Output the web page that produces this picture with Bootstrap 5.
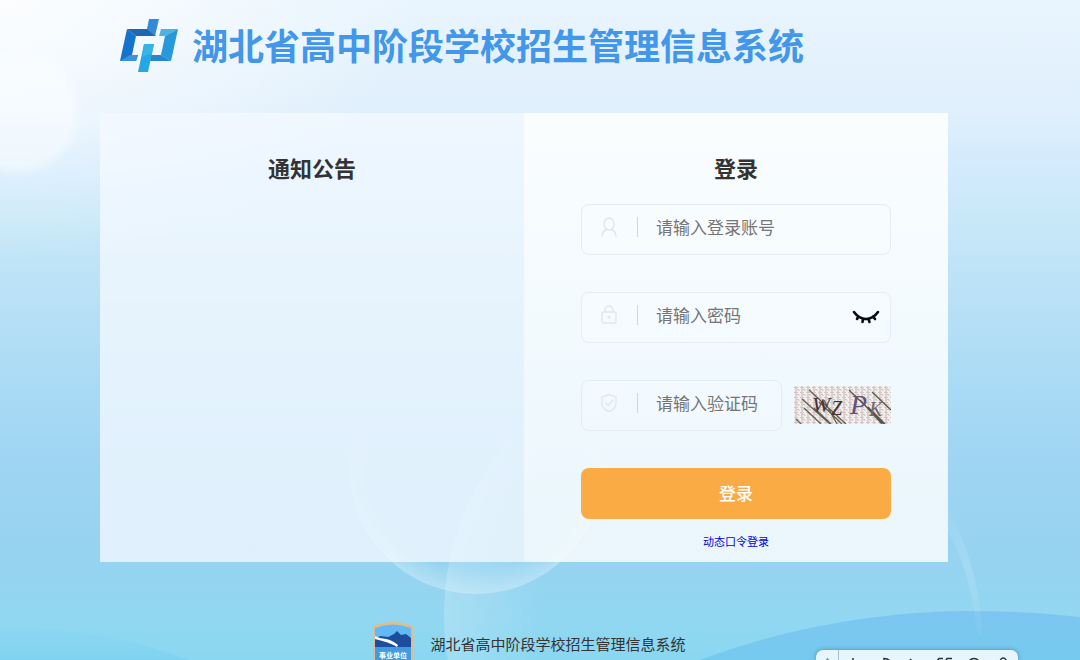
<!DOCTYPE html>
<html lang="zh-CN">
<head>
<meta charset="utf-8">
<meta name="viewport" content="width=device-width, initial-scale=1">
<title>湖北省高中阶段学校招生管理信息系统</title>
<link href="https://cdn.jsdelivr.net/npm/bootstrap@5.3.0/dist/css/bootstrap.min.css" rel="stylesheet">
<style>
  body { font-family: "Noto Sans CJK SC", sans-serif; color: #333; background: #9ad4f1; }
  .page { background: linear-gradient(180deg, #e9f5fe 0, #dfeffc 17%, #d0eafc 27%, #c8e8f8 33%, #b8e0f6 46%, #a9daf5 59%, #9dd4f2 72%, #96d3f0 84%, #92d7f1 94%, #8ad7f1 100%); padding: 0 132px 0 100px; }
  .scenery { z-index: 0; }
  .brand-bar { padding: 19px 20px 0; height: 113px; gap: 14px; }
  .brand-title { font-size: 36px; line-height: 50px; color: #4397ea; font-weight: 700; }
  .notice-side { background: rgba(243, 248, 255, .78); padding: 38px 20px; }
  .login-side { background: linear-gradient(rgba(253, 255, 255, .9), rgba(250, 253, 255, .84)); padding: 38px 57px 13px; }
  .panel-title { font-size: 22px; line-height: 32px; font-weight: 700; }
  .login-form { margin-top: 21px; gap: 37px; }
  .field { height: 51px; border: 1px solid #e3edf3; border-radius: 8px; padding: 0 10px 5px 17px; background: rgba(248, 251, 255, .35); }
  .field svg { flex: none; }
  .field-rule { width: 1px; height: 20px; background: #cfd6dc; margin: 0 18px; flex: none; }
  .field input { font-size: 17px; line-height: 24px; color: #333; min-width: 0; }
  .field input::placeholder { color: #757575; opacity: 1; }
  .eye-btn { margin-top: 5px; }
  .captcha-row { gap: 12px; }
  .captcha { width: 97px; height: 38px; margin-bottom: 2px; flex: none; }
  .submit-btn { height: 51px; border-radius: 8px; background: #faab43; color: #fff; font-size: 17px; line-height: 24px; padding: 12px 0 14px; font-weight: 500; }
  .submit-btn:hover { background: #f39f30; color: #fff; }
  .token-link { font-size: 11px; line-height: 16px; color: #0000e6; margin-top: 14px; }
  .link-row { line-height: 16px; }
  .site-foot { gap: 16px; margin-top: 59px; padding-left: 10px; font-size: 15px; }
  .site-foot span { line-height: 22px; margin-top: 12px; }
  .ime-bar { right: 62px; width: 202px; height: 10px; border-radius: 7px 7px 0 0; background: #e7f5fd; box-shadow: 0 0 4px rgba(40, 90, 120, .55); z-index: 3; }
</style>
</head>
<body>
<div class="page position-relative min-vh-100 overflow-hidden d-flex flex-column">
  <svg class="scenery position-absolute top-0 start-0 w-100 h-100" viewBox="0 0 1080 660" preserveAspectRatio="none" aria-hidden="true">
    <defs>
      <radialGradient id="glow" cx="0" cy="0" r="1"><stop offset="0" stop-color="#fff" stop-opacity=".85"/><stop offset="1" stop-color="#fff" stop-opacity="0"/></radialGradient>
      <radialGradient id="orb"><stop offset=".8" stop-color="#fbfeff" stop-opacity=".5"/><stop offset="1" stop-color="#fbfeff" stop-opacity="0"/></radialGradient>
      <radialGradient id="bubble"><stop offset=".8" stop-color="#fff" stop-opacity="0"/><stop offset="1" stop-color="#fff" stop-opacity=".3"/></radialGradient>
      <linearGradient id="fade" x2="0" y2="1"><stop offset=".3" stop-color="#000"/><stop offset=".88" stop-color="#fff"/></linearGradient>
      <mask id="lower"><rect x="340" y="335" width="270" height="265" fill="url(#fade)"/></mask>
      <linearGradient id="arc"><stop offset="0" stop-color="#fff" stop-opacity=".2"/><stop offset=".18" stop-color="#fff" stop-opacity="0"/></linearGradient>
      <linearGradient id="rim" x2="0" y2="1"><stop offset="0" stop-color="#fff" stop-opacity="0"/><stop offset=".5" stop-color="#fff" stop-opacity=".14"/><stop offset="1" stop-color="#fff" stop-opacity=".03"/></linearGradient>
      <linearGradient id="hill" x2="0" y2="1"><stop offset="0" stop-color="#7cc6f1"/><stop offset="1" stop-color="#76c9ee"/></linearGradient>
      <linearGradient id="shore" x2="0" y2="1"><stop offset="0" stop-color="#8cd7f2"/><stop offset="1" stop-color="#80d3f0"/></linearGradient>
    </defs>
    <rect width="420" height="260" fill="url(#glow)"/>
    <circle cx="18" cy="112" r="66" fill="url(#orb)"/>
    <circle cx="476" cy="467" r="127" fill="url(#bubble)" mask="url(#lower)"/>
    <circle cx="714" cy="615" r="270" fill="url(#arc)"/>
    <path d="M0 628Q100 626 190 660H0Z" fill="url(#shore)"/>
    <path d="M700 660C800 622 900 611 970 611Q1030 611 1080 617V660Z" fill="url(#hill)"/>
    <path d="M944 500Q978 560 983 636L977 636Q972 570 944 525Z" fill="url(#rim)"/>
  </svg>

  <header class="brand-bar d-flex align-items-start position-relative">
    <svg width="58" height="54" viewBox="0 0 58 54" role="img" aria-label="系统标志">
      <path d="M7 10H28L36 17H16L7 10Z" fill="#1d68b5"/>
      <path d="M7 10L16 17L12 36H18L16 42H0Z" fill="#1673cc"/>
      <path d="M0 42L10 36H18L16 42Z" fill="#3b92da"/>
      <path d="M29 0H39L35 17L27 10Z" fill="#338bd8"/>
      <path d="M41 10H58L45 17H39Z" fill="#4cb2df"/>
      <path d="M58 10L51 42L41 36L45 17Z" fill="#2699dc"/>
      <path d="M31 36H41L51 42H30Z" fill="#2588cb"/>
      <path d="M24 25H34L28 53H18Z" fill="#27a7e1"/>
      <path d="M24 25H34L32 34L22 38Z" fill="#35b5e5"/>
    </svg>
    <h1 class="brand-title text-nowrap mb-0">湖北省高中阶段学校招生管理信息系统</h1>
  </header>

  <main class="row g-0 position-relative">
    <section class="col-6 notice-side text-center">
      <h2 class="panel-title mb-0">通知公告</h2>
    </section>
    <section class="col-6 login-side text-center">
      <h2 class="panel-title mb-0">登录</h2>
      <form class="login-form d-flex flex-column">
        <div class="field d-flex align-items-center">
          <svg width="20" height="22" viewBox="0 0 20 22" fill="none" stroke="#e0e6ed" stroke-width="1.4" stroke-linecap="round" aria-hidden="true"><ellipse cx="10" cy="8" rx="5" ry="6"/><path d="M3 20Q3.500 15 7.500 13.500M17 20Q16.500 15 12.500 13.500"/></svg>
          <span class="field-rule"></span>
          <input type="text" class="form-control border-0 bg-transparent p-0 shadow-none" placeholder="请输入登录账号" aria-label="登录账号">
        </div>
        <div class="field d-flex align-items-center">
          <svg width="20" height="22" viewBox="0 0 20 22" fill="none" stroke="#e0e7eb" stroke-width="1.400" aria-hidden="true"><rect x="3" y="8" width="14" height="11" rx="1.500"/><path d="M6 8V6a4 4 0 0 1 8 0v2M10 12v3M8.500 13h3"/></svg>
          <span class="field-rule"></span>
          <input type="password" class="form-control border-0 bg-transparent p-0 shadow-none" placeholder="请输入密码" aria-label="密码">
          <button type="button" class="eye-btn btn p-0 border-0 d-flex" aria-label="显示密码">
            <svg width="28" height="16" viewBox="0 0 28 16" fill="none" stroke="#0b0b0b" stroke-width="2.600" stroke-linecap="round"><path d="M2 2Q7 9 14 9Q21 9 26 2M6.500 6.500L5 9M11 9L10.500 12M16.500 9L17.500 12M21 6.500L23 9"/></svg>
          </button>
        </div>
        <div class="captcha-row d-flex align-items-center">
          <div class="field d-flex align-items-center flex-fill">
            <svg width="20" height="22" viewBox="0 0 20 22" fill="none" stroke="#e1e8ec" stroke-width="1.400" stroke-linejoin="round" aria-hidden="true"><path d="M10 2.500L17 5V11Q17 17 10 19.500Q3 17 3 11V5ZM6.500 10.500L9.500 13.500L14 8"/></svg>
            <span class="field-rule"></span>
            <input type="text" class="form-control border-0 bg-transparent p-0 shadow-none" placeholder="请输入验证码" aria-label="验证码">
          </div>
          <svg class="captcha" viewBox="0 0 97 38" role="img" aria-label="验证码图片">
            <defs><pattern id="mesh" width="6" height="5" patternUnits="userSpaceOnUse"><rect width="6" height="5" fill="#f2f0ee"/><path d="M2 0V5" stroke="#c9b0b6" stroke-width="1"/><path d="M0 1.500H4" stroke="#d8c4c6" stroke-width="1"/><path d="M3.500 3l1.500 1.500" stroke="#98a088" stroke-width="1"/></pattern></defs>
            <rect width="97" height="38" fill="url(#mesh)"/>
            <g stroke="#5a5548" stroke-width="1.300" fill="none">
              <path d="M8 13L36 38M15 4L52 38M10 22L27 38M25 16L48 38M30 14L43 38M2 33L7 38M20 22L37 38" stroke="#65604b"/>
              <path d="M55 4L90 38M66 14L88 38M78 6L97 24M74 21L91 38"/>
            </g>
            <g font-family="Liberation Serif, serif" font-style="italic">
              <text x="18" y="26" font-size="22" fill="#493239">W</text>
              <text x="37" y="29" font-size="20" fill="#41302f">Z</text>
              <text x="56" y="28" font-size="28" fill="#66507c">P</text>
              <text x="75" y="30" font-size="20" fill="#706570">K</text>
            </g>
          </svg>
        </div>
        <button type="submit" class="submit-btn btn border-0 w-100">登录</button>
      </form>
      <div class="link-row"><a href="#" class="token-link d-inline-block text-decoration-none">动态口令登录</a></div>
    </section>
  </main>

  <footer class="site-foot d-flex justify-content-center align-items-start position-relative">
    <svg width="42" height="39" viewBox="0 0 42 39" role="img" aria-label="事业单位">
      <path d="M1 39V7Q1 5 3 4Q21-2 39 4Q41 5 41 7V39Z" fill="#dfbd8a"/>
      <path d="M3 39V7Q21 0 39 7V39Z" fill="#62b9f4"/>
      <path d="M3 17L9 15L16 16L22 13L25 10L29 14L34 13L39 17V27H3Z" fill="#1d4e9c"/>
      <path d="M3 26H39V39H3Z" fill="#3f9be2"/>
      <path d="M3 15Q8 18 14 18Q20 19 26 24L25 26Q17 21 3 18Z" fill="#fff"/>
      <text x="21" y="37" font-size="7" font-weight="700" text-anchor="middle" fill="#fff">事业单位</text>
    </svg>
    <span>湖北省高中阶段学校招生管理信息系统</span>
  </footer>

  <div class="ime-bar position-absolute bottom-0 overflow-hidden">
    <svg class="d-block" width="202" height="10" viewBox="0 0 202 10" fill="none" stroke="#27343c" stroke-width="1.500" aria-hidden="true">
      <path d="M22.500 0V10" stroke="#abc0cc" stroke-width="1"/>
      <path d="M9 12L11.500 9L14 12" stroke="#7f929e"/>
      <path d="M37 8V14M68 13V8.500Q74 8.500 75 14M94 9L96 11M120 12L123 8.500H127M129 12L131 8.500H136M152 12Q158 5 164 12M184 14Q184 8 187 8Q191 8 190 14"/>
    </svg>
  </div>
</div>
<script src="https://cdn.jsdelivr.net/npm/bootstrap@5.3.0/dist/js/bootstrap.bundle.min.js"></script>
</body>
</html>
